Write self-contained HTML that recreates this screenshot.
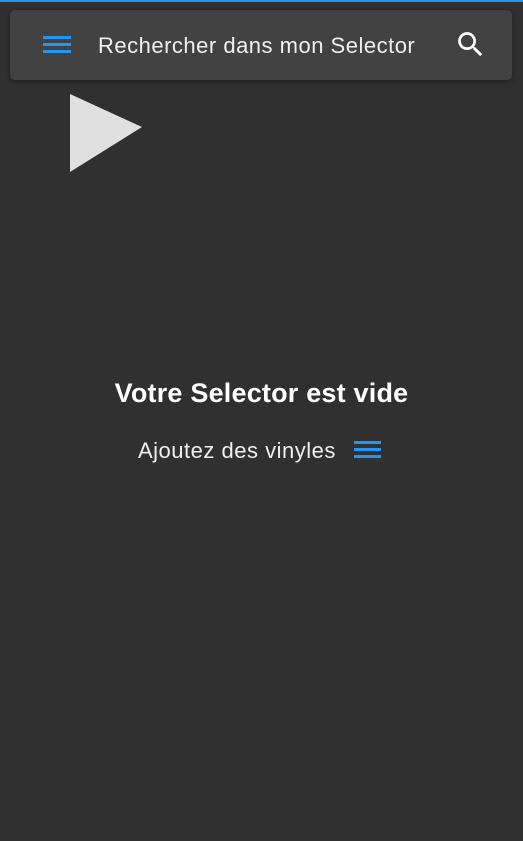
<!DOCTYPE html>
<html><head><style>
body{margin:0;width:523px;height:841px;background:#303030;font-family:"Liberation Sans",sans-serif;overflow:hidden;position:relative}
.top{position:absolute;left:0;top:0;width:523px;height:2px;background:#2196f3}
.bar{position:absolute;left:10px;top:10px;width:502px;height:70px;background:#424242;border-radius:5px;box-shadow:0 2px 6px rgba(0,0,0,.35)}
.txt{position:absolute;left:98px;top:33px;font-size:22px;letter-spacing:0.5px;color:#f0f0f0;white-space:nowrap}
</style></head><body>
<div class="top"></div>
<div class="bar"></div>
<svg style="position:absolute;left:43px;top:36px" width="28" height="19"><rect y="0" width="28" height="3" fill="#2196f3"/><rect y="7" width="28" height="3" fill="#2196f3"/><rect y="14" width="28" height="3" fill="#2196f3"/></svg>
<div class="txt">Rechercher dans mon Selector</div>
<svg style="position:absolute;left:454px;top:28px" width="33" height="33" viewBox="0 0 24 24"><path fill="#fff" d="M15.5 14h-.79l-.28-.27A6.47 6.47 0 0 0 16 9.5 6.5 6.5 0 1 0 9.5 16c1.61 0 3.090-.59 4.23-1.57l.27.28v.79l5 4.99L20.490 19l-4.99-5zm-6 0C7.01 14 5 11.99 5 9.5S7.010 5 9.5 5 14 7.01 14 9.5 11.99 14 9.5 14z"/></svg>
<svg style="position:absolute;left:0;top:0" width="523" height="200"><polygon points="70,94 142,127 70,172" fill="#e0e0e0"/></svg>
<div style="position:absolute;left:0;width:523px;top:378px;text-align:center;font-size:27px;letter-spacing:0.2px;font-weight:bold;color:#fff">Votre Selector est vide</div>
<div style="position:absolute;left:138px;top:438px;font-size:22px;letter-spacing:0.5px;color:#f0f0f0;white-space:nowrap">Ajoutez des vinyles</div>
<svg style="position:absolute;left:354px;top:441px" width="27" height="18"><rect y="0" width="27" height="3" fill="#2196f3"/><rect y="7" width="27" height="3" fill="#2196f3"/><rect y="14" width="27" height="3" fill="#2196f3"/></svg>
</body></html>
